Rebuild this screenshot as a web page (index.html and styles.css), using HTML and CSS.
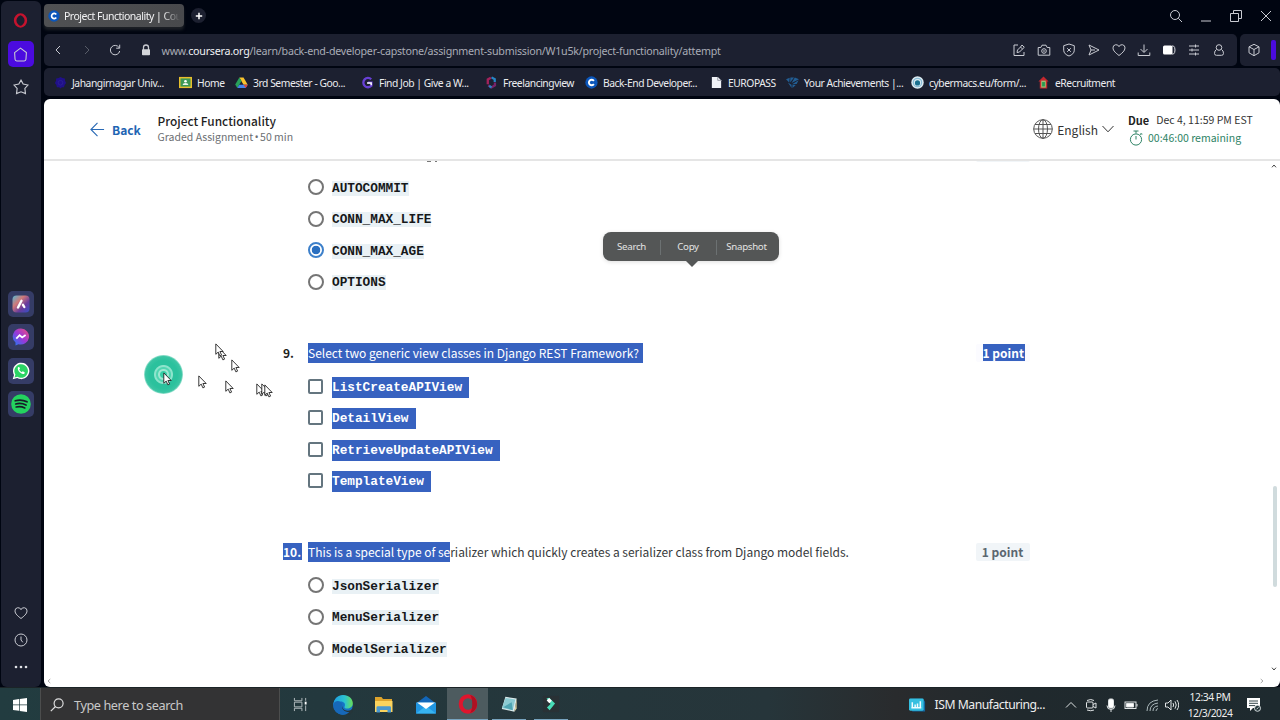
FILE: index.html
```html
<!DOCTYPE html>
<html lang="en">
<head>
<meta charset="utf-8">
<title>Project Functionality | Coursera</title>
<link rel="stylesheet" href="styles.css">
</head>

<body>
	<!-- Shared shapes -->
	<svg class="defs" width="0" height="0">
		<symbol id="cursor" viewBox="0 0 9 14"><path d="M.8.9v10.4l2.4-2.2 1.7 3.8 1.7-.8-1.7-3.6h3.3z" fill="#fff" stroke="#222" stroke-width=".9"/></symbol>
		<symbol id="coursera" viewBox="0 0 14 14"><circle cx="7" cy="7" r="6.6" fill="#0b56bb"/><path d="M9.6 5.2A3 3 0 1 0 9.6 8.8" fill="none" stroke="#fff" stroke-width="2"/></symbol>
		<symbol id="heart" viewBox="0 0 14 14"><path d="M7 12.5C4 10.2 1 7.8 1 4.9A3.1 3.1 0 0 1 7 3.7 3.1 3.1 0 0 1 13 4.9C13 7.8 10 10.2 7 12.5z"/></symbol>
	</svg>

	<div class="browser">
		<nav class="sidebar">
			<svg class="opera" viewBox="0 0 14 14"><ellipse cx="7" cy="7" rx="5" ry="5.5" fill="none" stroke="#c5132e" stroke-width="2.4"/><ellipse cx="7" cy="7" rx="2.7" ry="5" fill="#1c2030"/></svg>
			<div class="side-btn home"><svg class="line" viewBox="0 0 14 14"><path d="M1.5 5.2 7 1l5.500 4.2-.4 6.300q-.1 1.500-1.600 1.500h-7q-1.500 0-1.600-1.500z"/></svg></div>
			<svg class="line star" viewBox="0 0 14 14"><path d="M7 1l1.900 3.400 4.200.9-2.700 3 .5 4.500L7 11.200l-3.900 1.600.5-4.500-2.700-3 4.200-.9z"/></svg>
			<div class="side-apps">
				<div class="side-btn"><svg viewBox="0 0 18 18"><defs><linearGradient id="aria" x1="0" y1="0" x2="1" y2="1"><stop offset="0" stop-color="#55b8d4"/><stop offset=".35" stop-color="#d07a78"/><stop offset=".65" stop-color="#6a3b9c"/><stop offset="1" stop-color="#3450c8"/></linearGradient></defs><rect x=".5" y=".5" width="17" height="17" rx="4" fill="url(#aria)"/><path d="M6 12.500 9.500 5.800M11 9.800l1.300 2.200" stroke="#fff" stroke-width="2.400" stroke-linecap="round"/></svg></div>
				<div class="side-btn"><svg viewBox="0 0 18 18"><defs><linearGradient id="msgr" x1="0" y1="1" x2="1" y2="0"><stop offset="0" stop-color="#197ef5"/><stop offset=".5" stop-color="#9b37d8"/><stop offset="1" stop-color="#f0517c"/></linearGradient></defs><path d="M9 .5a8.300 8 0 1 1-2.500 15.700L3.500 17.500v-3A8 8 0 0 1 9 .5z" fill="url(#msgr)"/><path d="M4.300 10.700 7.600 7.200l2.600 2.200L13.600 7" fill="none" stroke="#fff" stroke-width="1.800"/></svg></div>
				<div class="side-btn"><svg viewBox="0 0 18 18"><path d="M.7 17.300 2 12.900A8.200 8.200 0 1 1 5.200 16.100z" fill="#fff"/><path d="M2.500 15.500 3.400 12.600A6.800 6.800 0 1 1 5.500 14.700z" fill="#2cd565"/><path d="M6.400 5.100c-2.500 2 3 8.500 6 6.600l.3-1.500-2-1-1 1C8.500 9.600 7.700 8.600 7.200 7.600l.8-.8-.8-1.800z" fill="#fff"/></svg></div>
				<div class="side-btn"><svg class="spotify" viewBox="0 0 20 20"><circle cx="10" cy="10" r="9.800" fill="#24d35f"/><path d="M4.200 6.800q6-1.900 11.800 1M4.700 10q5.400-1.500 10.300 1M5.200 13q4.500-1.100 8.600.9" fill="none" stroke="#171d28" stroke-width="1.700" stroke-linecap="round"/></svg></div>
			</div>
			<div class="side-bottom">
				<svg class="line" viewBox="0 0 14 14"><use href="#heart"/></svg>
				<svg class="line" viewBox="0 0 14 14"><circle cx="7" cy="7" r="6"/><path d="M7 3.500V7l1.800 2.300"/></svg>
				<svg class="dots" viewBox="0 0 14 14"><circle cx="2" cy="7" r="1.300"/><circle cx="7" cy="7" r="1.300"/><circle cx="12" cy="7" r="1.300"/></svg>
			</div>
		</nav>

		<div class="window">
			<div class="tabs">
				<div class="tab"><svg viewBox="0 0 14 14"><use href="#coursera"/></svg><span>Project Functionality | Coursera</span></div>
				<div class="new-tab"><svg viewBox="0 0 8 8"><path d="M4 .8v6.400M.8 4h6.400" stroke="#fff" stroke-width="1.500"/></svg></div>
				<div class="win-btns">
					<svg class="line" viewBox="0 0 14 14"><circle cx="6" cy="6" r="4.500"/><path d="M9.300 9.300 13 13"/></svg>
					<svg class="line" viewBox="0 0 14 14"><path d="M2 12h10"/></svg>
					<svg class="line" viewBox="0 0 14 14"><path d="M4.500 4V1.500h8v8H10M1.500 4.500h8v8h-8z"/></svg>
					<svg class="line" viewBox="0 0 14 14"><path d="M2 2l10 10M12 2 2 12"/></svg>
				</div>
			</div>

			<div class="address-row">
				<div class="address">
					<svg class="line nav-ic" viewBox="0 0 14 14"><path d="M9 3 5 7l4 4"/></svg>
					<svg class="line nav-ic off" viewBox="0 0 14 14"><path d="M5 3l4 4-4 4"/></svg>
					<svg class="line nav-ic" viewBox="0 0 14 14"><path d="M11 4.500A4.700 4.700 0 1 0 11.700 8M11.700 1.700v3.500H8.200"/></svg>
					<svg class="lock" viewBox="0 0 10 12"><path d="M2.500 6V3.500a2.500 2.500 0 0 1 5 0V6" fill="none" stroke="#c8cad0" stroke-width="1.300"/><rect x="1" y="5.300" width="8" height="6" rx=".8" fill="#d4d6da"/></svg>
					<span class="url">www.<b>coursera.org</b>/learn/back-end-developer-capstone/assignment-submission/W1u5k/project-functionality/attempt</span>
					<div class="tools">
						<svg class="line" viewBox="0 0 14 14"><path d="M6 2H2v10.500h10V9M5 9.500l.5-2.500 3-3 2 2-3 3zM8.500 4 10 2l2.300 2.300L10.500 6"/></svg>
						<svg class="line" viewBox="0 0 14 14"><path d="M1.200 4.500h2.600L5 2.200h4l1.200 2.300h2.600v7.700H1.200z"/><circle cx="7" cy="8" r="2.300"/><circle cx="7" cy="8" r=".4"/></svg>
						<svg class="line" viewBox="0 0 14 14"><path d="M7 1l5.300 1.700v4.500C12.300 10 10 12 7 13 4 12 1.700 10 1.700 7.200V2.700zM5.200 5.200l3.600 3.600M8.800 5.200 5.200 8.800"/></svg>
						<svg class="line" viewBox="0 0 14 14"><path d="M2 2l10 5-10 5 2-5zM4 7h4"/></svg>
						<svg class="line" viewBox="0 0 14 14"><use href="#heart"/></svg>
						<svg class="line" viewBox="0 0 14 14"><path d="M7 1.500V9M3.500 6 7 9.500 10.500 6M1.200 9.500v3h11.600v-3"/></svg>
						<svg viewBox="0 0 14 14"><rect x="1" y="2.500" width="9.500" height="9" rx="1.500" fill="#fff"/><path d="M10 3h1.500q1.500 1 1.500 4t-1.500 4H10" fill="none" stroke="#d5d7dc"/></svg>
						<svg class="line" viewBox="0 0 14 14"><path d="M2 3h10M2 7h10M2 11h10M8.500 1.500v3M5 5.500v3M8.500 9.500v3"/></svg>
						<svg class="line" viewBox="0 0 14 14"><circle cx="7" cy="4.500" r="2.800"/><path d="M4.500 6.500q-2 1-2 4 0 1.800 2 1.800h5q2 0 2-1.800 0-3-2-4"/></svg>
					</div>
				</div>
				<div class="extension">
					<svg class="line" viewBox="0 0 14 14"><path d="M7 1.300l5 2.500v6L7 12.700 2 9.800v-6zM2 3.800l5 2.700 5-2.700M7 6.500v6"/></svg>
					<i></i>
				</div>
			</div>

			<div class="bookmarks">
				<a><svg viewBox="0 0 14 14"><path d="M7 1l2 1.200 2.700.4.200 2.600L13 7.500l-1.500 2.300-.8 2.200H8.500L7 13.500 5.500 12H3.200l-.7-2.300L1 7.500l1.200-2.300.1-2.600L5 2.200z" fill="#201089"/><circle cx="7" cy="7.300" r="2.500" fill="none" stroke="#2c2396" stroke-width=".8"/></svg><span>Jahangirnagar Univ...</span></a>
				<a><svg viewBox="0 0 14 14"><path d="M0 1h14v12H0z" fill="#e7bf2d"/><path d="M1.600 2.600h10.800v8.800H1.600z" fill="#3c9855"/><circle cx="7" cy="5.600" r="1.400" fill="#fff"/><path d="M4 9.800q0-2.200 3-2.200t3 2.200z" fill="#e8f5e9"/></svg><span>Home</span></a>
				<a><svg viewBox="0 0 14 14"><path d="M4.700 1.500h4.500L13.700 9.300H9.200z" fill="#f9c22c"/><path d="M4.700 1.500 7 5.500 2.500 13 .2 9.200z" fill="#28a05a"/><path d="M4.600 9.300h9.100L11.500 13h-9z" fill="#4384ed"/><path d="M9.200 9.300h4.500L11.500 13z" fill="#df4537"/></svg><span>3rd Semester - Goo...</span></a>
				<a><svg viewBox="0 0 14 14"><path d="M11 3.500A5 5 0 1 0 11.200 10.500V7.200H7.500" fill="none" stroke="#6840d5" stroke-width="2.500"/><path d="M6.500 7.500h4.500v2.500" fill="none" stroke="#fff" stroke-width="1.500"/></svg><span>Find Job | Give a W...</span></a>
				<a><svg viewBox="0 0 14 14"><path d="M7 1.500 10.500 3.500v3" fill="none" stroke="#2786c6" stroke-width="2.400"/><path d="M6.300 1.800 3 3.800v5" fill="none" stroke="#a5225c" stroke-width="2.500"/><path d="M3.500 10 7 12.300 10.700 10V7" fill="none" stroke="#782368" stroke-width="2.500"/><path d="M4.500 10.600 7 12.300" stroke="#2786c6" stroke-width="2.500"/></svg><span>Freelancingview</span></a>
				<a><svg viewBox="0 0 14 14"><use href="#coursera"/></svg><span>Back-End Developer...</span></a>
				<a><svg viewBox="0 0 14 14"><path d="M2 1h6.500L12 4.500V13H2z" fill="#f0f2f7"/><path d="M8.300 1v3.700H12" fill="none" stroke="#737783" stroke-width=".7"/></svg><span>EUROPASS</span></a>
				<a><svg viewBox="0 0 14 14"><path d="M0 3.500 4 2l-.5 5zM4.700 1.500h4L4.500 7zM9.500 1.500 14 3.500 6 7.500zM13.500 4.500l-2 4-5 .3zM2 7l4 6V9.500zM7 9.500l3.500.2L7 13z" fill="#225e94"/></svg><span>Your Achievements |...</span></a>
				<a><svg viewBox="0 0 14 14"><circle cx="7" cy="7" r="6.700" fill="#dcebf2"/><circle cx="7" cy="7" r="4.500" fill="none" stroke="#89bdd7" stroke-width="1.300"/><circle cx="7" cy="7.500" r="2.800" fill="#19708f"/></svg><span>cybermacs.eu/form/...</span></a>
				<a><svg viewBox="0 0 14 14"><path d="M7 .5 12.500 6H11v7.500H3V6H1.500z" fill="#c3282e"/><path d="M4.500 5h5v7.500h-5z" fill="#a3b873"/><path d="M5.500 6.500h3v4.700h-3z" fill="#279c50"/></svg><span>eRecruitment</span></a>
			</div>

			<div class="page">
				<header class="header">
					<svg class="arrow" viewBox="0 0 16 16"><path d="M15 8H1M8 1 1 8l7 7"/></svg>
					<span class="back">Back</span>
					<div class="heading">
						<div class="title">Project Functionality</div>
						<div class="sub">Graded Assignment <span class="bullet">•</span> 50 min</div>
					</div>
					<div class="lang">
						<svg class="globe" viewBox="0 0 20 20"><circle cx="10" cy="10" r="9.300"/><ellipse cx="10" cy="10" rx="4.500" ry="9.300"/><path d="M10 .7v18.600M.7 10h18.600M2 5.500h16M2 14.500h16"/></svg>
						<span>English</span>
						<svg class="chev" viewBox="0 0 12 8"><path d="M.5 1 6 6.800 11.500 1"/></svg>
					</div>
					<div class="due">
						<div class="due-line"><b>Due</b><span>Dec 4, 11:59 PM EST</span></div>
						<div class="left"><svg viewBox="0 0 14 16"><circle cx="7" cy="9.500" r="5.600"/><path d="M7 9.500V6M7 3.500V1M4.500 1h5M11.300 5l1.400-1.400M11.500 3l1.500 1.500"/></svg><span>00:46:00 remaining</span></div>
					</div>
				</header>

				<main class="quiz">
					<div class="question cut">
						<span></span>
						<div class="tails"><i></i><i></i></div>
						<span class="points">1 point</span>
					</div>
					<div class="options">
						<label><i class="radio"></i><code>AUTOCOMMIT</code></label>
						<label><i class="radio"></i><code>CONN_MAX_LIFE</code></label>
						<label><i class="radio on"></i><code>CONN_MAX_AGE</code></label>
						<label><i class="radio"></i><code>OPTIONS</code></label>
					</div>

					<div class="question">
						<span class="num">9.</span>
						<div class="text"><span class="sel tail">Select two generic view classes in Django REST Framework?</span></div>
						<span class="points picked"><span class="sel">1 point</span></span>
					</div>
					<div class="options">
						<label><i class="check"></i><code class="sel">ListCreateAPIView</code></label>
						<label><i class="check"></i><code class="sel">DetailView</code></label>
						<label><i class="check"></i><code class="sel">RetrieveUpdateAPIView</code></label>
						<label><i class="check"></i><code class="sel">TemplateView</code></label>
					</div>

					<div class="question">
						<span class="num"><span class="sel">10.</span></span>
						<div class="text"><span class="sel">This is a special type of se</span>rializer which quickly creates a serializer class from Django model fields.</div>
						<span class="points">1 point</span>
					</div>
					<div class="options">
						<label><i class="radio"></i><code>JsonSerializer</code></label>
						<label><i class="radio"></i><code>MenuSerializer</code></label>
						<label><i class="radio"></i><code>ModelSerializer</code></label>
					</div>
				</main>

				<!-- Scrollbar parts -->
				<svg class="sb up" viewBox="0 0 6 6"><path d="M1 4.300 3 2l2 2.300"/></svg>
				<svg class="sb down" viewBox="0 0 6 6"><path d="M1 1.700 3 4l2-2.300"/></svg>
				<svg class="sb left-end" viewBox="0 0 6 6"><path d="M4.300 1 2 3l2.300 2"/></svg>
				<svg class="sb right-end" viewBox="0 0 6 6"><path d="M1.700 1 4 3 1.700 5"/></svg>
				<div class="thumb"></div>

				<div class="popup"><span>Search</span><span>Copy</span><span>Snapshot</span></div>

				<!-- Mouse trail -->
				<div class="click"></div>
				<svg class="cur c1"><use href="#cursor"/></svg>
				<svg class="cur c2"><use href="#cursor"/></svg>
				<svg class="cur c3"><use href="#cursor"/></svg>
				<svg class="cur c4"><use href="#cursor"/></svg>
				<svg class="cur c5"><use href="#cursor"/></svg>
				<svg class="cur c6"><use href="#cursor"/></svg>
				<svg class="cur c7"><use href="#cursor"/></svg>
				<svg class="cur c8"><use href="#cursor"/></svg>
				<svg class="cur c9"><use href="#cursor"/></svg>
			</div>
		</div>
	</div>

	<footer class="taskbar">
		<div class="start"><svg viewBox="0 0 14 14"><path d="M0 2l6-.9v5.500H0zM6.700 1 14 0v6.600H6.700zM0 7.300h6v5.500L0 12zM6.700 7.300H14V14l-7.300-1z" fill="#fff"/></svg></div>
		<div class="search"><svg viewBox="0 0 14 14"><circle cx="8.600" cy="5.300" r="4.500"/><path d="M5.500 8.500.8 13.200"/></svg><span>Type here to search</span></div>
		<div class="apps">
			<div class="app"><svg class="task" viewBox="0 0 16 16"><path d="M1.500 1v3h8V1M1.500 15v-3h8v3M1.500 5.500h8v5h-8zM13.500 1v3M13.500 9v6" fill="none" stroke="#b7c0c2"/><path d="M12.500 5h2v3h-2z" fill="#fff"/></svg></div>
			<div class="app"><svg viewBox="0 0 20 20"><defs><linearGradient id="edge" x1="0" x2="1"><stop offset="0" stop-color="#1d9de2"/><stop offset=".6" stop-color="#2cc3d0"/><stop offset="1" stop-color="#6ade55"/></linearGradient></defs><circle cx="10" cy="10" r="9.800" fill="#1672c5"/><path d="M.2 10C1 3.500 5 0 10 0c6 0 9.800 4 9.800 8.300 0 3.700-3 5.200-5.500 5.200-2.200 0-3.500-.9-2.700-2.100C13.500 8 8 3.200.2 10z" fill="url(#edge)"/><path d="M9.300 10.500c-.8 3.500 3.500 6.500 8.700 4.500l1.300-1.300L20 17l-4 3q-5-3.500-7.500-6z" fill="#26353a"/><path d="M.3 9c2-4.500 7.700-3.700 9 .3-1.500 2.500.5 7.700 7 7.700-2 2-5 3-7.500 2.700C4 19-.5 15 .3 9z" fill="#1768b9"/></svg></div>
			<div class="app"><svg viewBox="0 0 20 20"><path d="M1 2h6.500l1.500 2h9v13H1z" fill="#dea42c"/><path d="M1 6h17.500v11H1z" fill="#fbd35d"/><path d="M2.500 17.500v-5q0-1.300 1.300-1.300h12q1.200 0 1.200 1.300v5h-3.500V15H6v2.500z" fill="#4a98cf"/></svg></div>
			<div class="app"><svg viewBox="0 0 20 20"><path d="M0 8.500 10 1l10 7.500H0z" fill="#1266b8"/><path d="M0 7.500h20V18.500H0z" fill="#2196e2"/><path d="M0 18.500 10 11l10 7.500z" fill="#37b4f1"/><path d="M1 7.500h18L10 14z" fill="#fff"/></svg></div>
			<div class="app active"><svg viewBox="0 0 20 20"><ellipse cx="10" cy="10" rx="7.300" ry="7.800" fill="none" stroke="#df152d" stroke-width="4"/><path d="M12 1c4 1 7 4.500 7 9s-3 8-7 9c3-3 3-15 0-18z" fill="#ae1022"/></svg></div>
			<div class="app open"><svg viewBox="0 0 20 20"><path d="M6 2 18.500 4 16 18.500l-14-3z" fill="#dcebec"/><path d="M6.200 3.200 17 5l-2.800 12-12-2.500z" fill="#8bcbd2"/><path d="M13 8l-9.500 5.500 10.700 3.400z" fill="#4fa5b2"/><path d="M16 18.500l2.500-3.500V4" fill="#e0d19f"/></svg></div>
			<div class="app open"><svg viewBox="0 0 20 20"><path d="M1 1h18v18H1z" fill="#293135"/><path d="M5 4 8 3l6.500 6.500L8.500 17 5.500 14l4-4z" fill="#48dcb7"/><path d="M5.200 6.200 8 3.300l3 3-2.800 3z" fill="#fff"/></svg></div>
		</div>
		<div class="news"><svg viewBox="0 0 18 14"><path d="M1 .5h14l2 3V14H3.500z" fill="#13659f"/><rect width="15.500" height="13" rx="1.500" fill="#35bfe0"/><path d="M3.500 4v5.500M6.500 6.500v3M9 5.500v4M12 3v6.500M2.500 10h10.500" stroke="#f0fcff" stroke-width="1.600"/></svg><span>ISM Manufacturing...</span></div>
		<div class="tray">
			<svg viewBox="0 0 14 14"><path d="M2 9.500 7 4.500l5 5"/></svg>
			<svg viewBox="0 0 14 14"><path d="M3 2.500q4-2 7 0M3 12q4 1.500 7 0"/><rect x="2.500" y="4" width="6.500" height="6" rx="1"/><path d="M9 6.500 12 5v5L9 8.500"/></svg>
			<svg viewBox="0 0 14 14"><rect x="4.500" y="1" width="5" height="9" rx="1.500" fill="#fff"/><path d="M3 7.500q0 4 4 4t4-4M7 11.500V14"/></svg>
			<svg viewBox="0 0 14 14"><rect x="1" y="4" width="11" height="6.500"/><path d="M2.500 5.500h7V9h-7z" fill="#fff"/><path d="M13 6v2.500"/></svg>
			<svg viewBox="0 0 14 14"><path d="M2 13Q2 3 13 2M5 13q0-7 8-8M8 13q0-4.500 5-5M11 13q0-2 2-2.500" stroke="#abb8bb"/></svg>
			<svg viewBox="0 0 14 14"><path d="M.5 5H3l3-3v10L3 9H.5zM8 5q1.300 2 0 4M10 3.300q2.500 3.700 0 7.400M12 2q3.500 5 0 10"/></svg>
		</div>
		<div class="clock"><div>12:34 PM</div><div>12/3/2024</div></div>
		<svg class="notes" viewBox="0 0 16 16"><path d="M1 1h13v10H7l-3 3v-3H1z" fill="#fff"/><path d="M3 4h9M3 6.300h9M3 8.600h6" stroke="#34464b"/><circle cx="11.500" cy="11.300" r="3" fill="#23353a" stroke="#d5dcdd"/><path d="M10.500 12.300l2-2" stroke="#fff" stroke-width=".8"/></svg>
	</footer>
</body>
</html>
```

FILE: styles.css
```css
* {
	box-sizing: border-box;
}

body {
	margin: 0;
	width: 1280px;
	height: 720px;
	overflow: hidden;
	display: flex;
	flex-direction: column;
	background: #000511;
	font-family: "Noto Sans", sans-serif;
}

svg {
	display: block;
	flex: none;
}

.defs {
	position: absolute;
}

.line {
	fill: none;
	stroke: #c9cbd2;
	stroke-width: 1;
	width: 14px;
	height: 14px;
}

.browser {
	display: flex;
	height: 687px;
}

/* Sidebar */
.sidebar {
	width: 40px;
	margin: 1px 3px 0 1px;
	border-radius: 6px;
	background: #1c2030;
	display: flex;
	flex-direction: column;
	align-items: center;
	padding-right: 1px;
}

.opera {
	width: 15px;
	height: 15px;
	margin-top: 12px;
}

.side-btn {
	width: 26px;
	height: 26px;
	border-radius: 5px;
	background: #353c66;
	display: flex;
	align-items: center;
	justify-content: center;
}

.side-btn svg {
	width: 18px;
	height: 18px;
}

.side-btn .spotify {
	width: 20px;
	height: 20px;
}

.home {
	background: #4b0bdf;
	margin-top: 13px;
}

.home .line {
	width: 15px;
	height: 15px;
}

.star {
	width: 16px;
	height: 16px;
	margin-top: 12px;
}

.side-apps {
	margin-top: 195.5px;
	display: grid;
	gap: 7.5px;
}

.side-bottom {
	margin-top: auto;
	margin-bottom: 13px;
	display: grid;
	gap: 13px;
}

.dots {
	width: 14px;
	height: 14px;
	fill: #e0e1e6;
}

.window {
	flex: 1;
	min-width: 0;
	display: flex;
	flex-direction: column;
}

/* Tab strip */
.tabs {
	height: 34px;
	display: flex;
	align-items: flex-start;
	padding-top: 4px;
}

.tab {
	width: 140px;
	height: 23px;
	border-radius: 4px;
	background: linear-gradient(90deg, #505153, #48494c);
	display: flex;
	align-items: center;
	gap: 4px;
	padding-left: 4px;
	color: #f2f2f3;
	font-size: 10.5px;
	letter-spacing: -.5px;
	white-space: nowrap;
	overflow: hidden;
	box-shadow: 0 3px 3px #1c2026;
}

.tab svg {
	width: 12px;
	height: 12px;
}

.tab span {
	width: 116px;
	overflow: hidden;
	-webkit-mask-image: linear-gradient(90deg, #000 85%, transparent);
	mask-image: linear-gradient(90deg, #000 85%, transparent);
}

.new-tab {
	width: 15px;
	height: 15px;
	border-radius: 50%;
	background: #1c2030;
	margin: 4px 0 0 7px;
	display: flex;
	align-items: center;
	justify-content: center;
}

.new-tab svg {
	width: 8px;
	height: 8px;
}

.win-btns {
	margin: 5px 7px 0 auto;
	display: flex;
	gap: 16px;
}

/* Address bar */
.address-row {
	display: flex;
	gap: 3px;
	height: 32px;
}

.address {
	width: 1193px;
	background: #1c2030;
	border-radius: 5px;
	display: flex;
	align-items: center;
	padding-left: 7px;
}

.nav-ic {
	margin-right: 14.5px;
}

.off {
	opacity: .35;
}

.lock {
	width: 10px;
	height: 12px;
	margin: 0 11px 0 4px;
}

.url {
	font-size: 10.7px;
	letter-spacing: -.24px;
	color: #a9acb6;
	white-space: nowrap;
	padding-top: 1px;
}

.url b {
	font-weight: 400;
	color: #f0f1f4;
}

.tools {
	margin-left: auto;
	margin-right: 11px;
	display: flex;
	gap: 11px;
}

.tools svg {
	width: 14px;
	height: 14px;
}

.extension {
	flex: 1;
	background: #1c2030;
	border-radius: 5px 0 0 5px;
	display: flex;
	align-items: center;
	padding-left: 7px;
}

.extension i {
	width: 5px;
	height: 20px;
	border-radius: 2px;
	background: #4b0bdf;
	margin-left: 10px;
}

/* Bookmarks */
.bookmarks {
	height: 28px;
	margin: 2px 0 3px;
	background: #1c2030;
	border-radius: 5px;
	display: grid;
	grid-template-columns: 125px 56px 126px 124px 100px 125px 76px 125px 126px 78px;
	padding: 1px 0 0 10px;
	align-items: center;
	font-size: 10.3px;
	letter-spacing: -.45px;
	color: #ebecef;
	white-space: nowrap;
}

.bookmarks a {
	display: flex;
	align-items: center;
	gap: 5px;
}

.bookmarks svg {
	width: 13px;
	height: 13px;
}

/* Page */
.page {
	position: relative;
	flex: 1;
	background: #fff;
	border-radius: 6px;
	overflow: hidden;
	font-family: "Noto Sans CJK SC", sans-serif;
	color: #1f1f1f;
}

.header {
	height: 62px;
	border-bottom: 2px solid #e5e5e5;
	display: flex;
	align-items: center;
	padding-left: 46px;
	padding-right: 27px;
}

.header svg {
	fill: none;
	stroke: #555;
}

.header .arrow {
	width: 15px;
	height: 15px;
	stroke: #2a6ab5;
	stroke-width: 1.2;
}

.back {
	margin-left: 7px;
	width: 45.5px;
	color: #1f65b3;
	font-weight: 700;
	font-size: 12px;
}

.title {
	font-size: 11.9px;
	line-height: 16px;
	font-weight: 500;
}

.sub {
	font-size: 10.5px;
	line-height: 16px;
	color: #6c6f73;
}

.bullet {
	font-family: "Noto Sans", sans-serif;
	font-size: 10px;
	line-height: 1;
	margin: 0 -.8px;
}

.lang {
	margin-left: auto;
	display: flex;
	align-items: center;
	font-size: 12px;
	color: #333;
}

.globe {
	width: 20px;
	height: 20px;
	margin-right: 4px;
}

.lang .chev {
	width: 12px;
	height: 8px;
	margin-left: 4px;
	stroke: #333;
}

.due {
	width: 125px;
	margin-left: 14px;
	font-size: 10.5px;
	line-height: 18px;
	white-space: nowrap;
}

.due-line {
	display: flex;
	gap: 7px;
	color: #333;
}

.due-line b {
	color: #1f1f1f;
	font-size: 11px;
}

.left {
	display: flex;
	align-items: center;
	gap: 5px;
	padding-left: 1px;
	color: #2e8365;
}

.header .left svg {
	width: 14px;
	height: 16px;
	stroke: #2e8365;
}

/* Quiz */
.quiz {
	width: 985.5px;
	padding-left: 239px;
	font-size: 12px;
}

.question {
	display: grid;
	grid-template-columns: 25px 1fr auto;
	align-items: center;
	height: 20px;
	line-height: 20px;
	margin: 45.6px 0 7.8px;
	white-space: nowrap;
	color: #373a3c;
}

.question.cut {
	height: 10.8px;
	margin: 0;
	align-items: start;
	overflow: hidden;
}

.cut .points {
	margin-top: -17px;
}

.tails {
	display: flex;
	gap: 4px;
	padding-left: 119px;
}

.tails i {
	width: 4px;
	height: 1px;
	background: #777;
}

.tails i + i {
	width: 2px;
}

.text {
	letter-spacing: -.02px;
}

.num {
	font-weight: 700;
	color: #1f1f1f;
}

.num .sel {
	display: block;
	width: 19px;
	height: 17px;
	line-height: 17px;
}

.sel {
	background: #3762c0;
	color: #fff;
}

.text .sel {
	display: inline-block;
}

.tail {
	padding-right: 4px;
}

.points {
	width: 54px;
	height: 18px;
	line-height: 18px;
	text-align: center;
	background: #f1f5f8;
	border-radius: 2px;
	color: #5b6770;
	font-weight: 700;
}

.picked {
	background: #fbfbff;
}

.picked .sel {
	display: block;
	width: 42px;
	height: 17px;
	line-height: 17px;
	margin-left: 7px;
	text-align: left;
}

.options {
	padding-left: 25px;
}

.options label {
	display: flex;
	align-items: center;
	height: 31.4px;
	gap: 8px;
}

.radio,
.check {
	width: 16px;
	height: 16px;
	border: 2px solid #757575;
	background: #fff;
}

.radio {
	border-radius: 50%;
}

.check {
	width: 15px;
	height: 15px;
	border-color: #64757f;
	border-radius: 2px;
	margin-right: 1px;
}

.on {
	border-color: #3d80ca;
	background: radial-gradient(circle, #2a6fc0 4px, #fff 4.6px);
}

code {
	font: bold 12.75px/15px "Liberation Mono", monospace;
	background: #e9f1f5;
	color: #16181a;
	margin-top: 2px;
}

code.sel {
	background: #3762c0;
	color: #fff;
	line-height: 21px;
	padding-right: 7px;
}

/* Scrollbars */
.sb {
	position: absolute;
	width: 6px;
	height: 6px;
	fill: none;
	stroke: #444;
}

.up {
	right: 3px;
	top: 64px;
}

.down {
	right: 3px;
	bottom: 15px;
}

.left-end {
	left: 2px;
	bottom: 3px;
	stroke: #aaa;
}

.right-end {
	right: 15px;
	bottom: 3px;
	stroke: #aaa;
}

.thumb {
	position: absolute;
	right: 3px;
	top: 387px;
	width: 4px;
	height: 101px;
	border-radius: 2px;
	background: #d0dbdd;
}

/* Selection popup */
.popup {
	position: absolute;
	left: 559px;
	top: 133px;
	width: 176px;
	height: 29px;
	border-radius: 8px;
	background: #545656;
	color: #e3e3e3;
	font: 9.7px/30px "Noto Sans", sans-serif;
	letter-spacing: -.3px;
	display: grid;
	grid-template-columns: 57px 56px 61px;
	text-align: center;
	box-shadow: 0 1px 4px #ddd;
}

.popup span + span {
	background: linear-gradient(#6c7172, #6c7172) 0 50% / 1px 15px no-repeat;
}

.popup::after {
	content: "";
	position: absolute;
	left: 82px;
	top: 28px;
	border: 7px solid transparent;
	border-top-color: #545656;
	border-bottom: 0;
}

/* Mouse trail */
.click {
	position: absolute;
	left: 100px;
	top: 256px;
	width: 39px;
	height: 39px;
	border-radius: 50%;
	background: radial-gradient(circle, #35cfa6 3px, #9ee8d2 4px, #9ee8d2 5px, #50d5b1 6px, #50d5b1 7px, #8de4cc 8px, #8de4cc 9px, #2bc19d 10px, #2bc19d 14px, #3cc5a4 18px, #a5e5d5 19.5px);
}

.cur {
	position: absolute;
	width: 9px;
	height: 14px;
}

.c1 { left: 174px; top: 248px; }
.c2 { left: 171px; top: 244px; }
.c3 { left: 187px; top: 260px; }
.c4 { left: 154px; top: 276px; }
.c5 { left: 181px; top: 281px; }
.c6 { left: 212px; top: 284px; }
.c7 { left: 217px; top: 284px; }
.c8 { left: 220px; top: 285px; }
.c9 { left: 119px; top: 273px; }

/* Taskbar */
.taskbar {
	height: 33px;
	border-top: 1px solid #1b2427;
	background: linear-gradient(90deg, #223c40, #23383d 25%, #26353a 60%, #292b2d 70%, #20292d 80%, #1e2a2f);
	display: flex;
	color: #eee;
}

.start {
	width: 40px;
	padding-top: 1px;
	display: flex;
	align-items: center;
	justify-content: center;
}

.start svg {
	width: 14px;
	height: 14px;
}

.search {
	width: 240px;
	background: #333334;
	border: 1px solid #4c4d4d;
	border-width: 0 1px;
	display: flex;
	align-items: center;
	gap: 10px;
	padding: 1px 0 0 9px;
	font-size: 12.7px;
	letter-spacing: -.42px;
	color: #c9c9c9;
}

.search svg {
	width: 14px;
	height: 14px;
	fill: none;
	stroke: #ddd;
	stroke-width: 1.2;
}

.apps {
	display: flex;
}

.app {
	width: 41.6px;
	padding-top: 1px;
	display: flex;
	align-items: center;
	justify-content: center;
}

.app svg {
	width: 20px;
	height: 20px;
}

.app .task {
	width: 15px;
	height: 15px;
}

.app:first-child {
	width: 42px;
	padding-right: 2px;
}

.active {
	background: #4d5b5f;
}

.active,
.open {
	border-bottom: 1px solid #78a4bf;
}

.open {
	width: 34px;
	margin: 0 3.8px;
}

.open svg {
	width: 18px;
	height: 18px;
}

.news {
	margin-left: auto;
	padding-top: 1px;
	display: flex;
	align-items: center;
	gap: 9px;
	font-size: 12.2px;
	letter-spacing: -.47px;
	white-space: nowrap;
}

.news svg {
	width: 17px;
	height: 14px;
}

.news span {
	width: 110px;
}

.tray {
	display: flex;
	align-items: center;
	gap: 6.3px;
	margin-left: 19px;
	padding-top: 1px;
}

.tray svg {
	width: 14px;
	height: 14px;
	fill: none;
	stroke: #dfe3e4;
}

.clock {
	width: 50px;
	margin-left: 6px;
	padding-top: 2px;
	font-size: 10.3px;
	letter-spacing: -.47px;
	line-height: 15.5px;
	text-align: center;
}

.notes {
	width: 16px;
	height: 16px;
	margin: 9px 18px 0 11px;
}
```
